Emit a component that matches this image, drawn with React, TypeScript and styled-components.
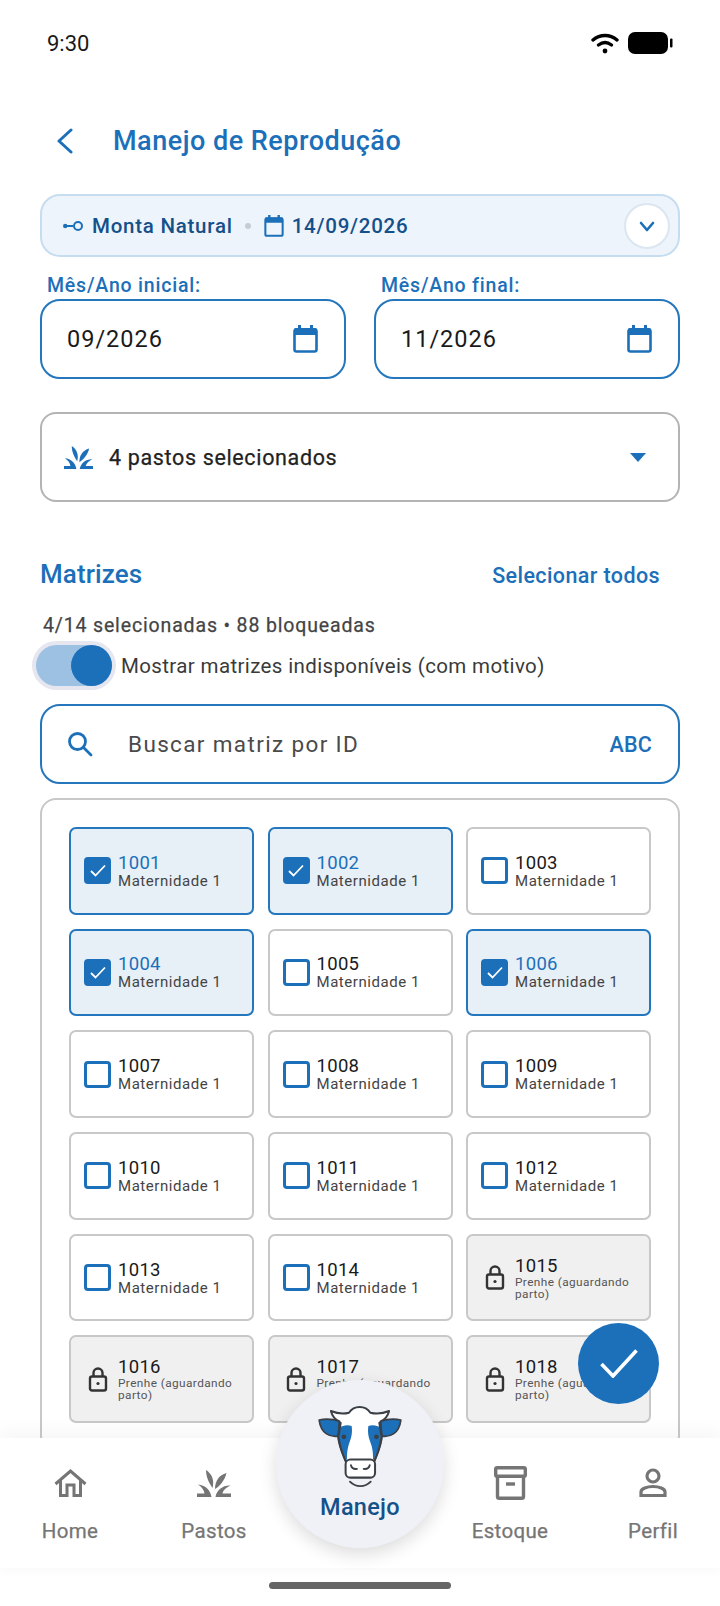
import * as React from "react";
import styled, { createGlobalStyle } from "styled-components";

const BLUE = "#1c6fb9";
const DARK_BLUE = "#14508a";

const GlobalStyle = createGlobalStyle`
  html, body {
    margin: 0;
    padding: 0;
    background: #fff;
  }
  * {
    box-sizing: border-box;
  }
  body {
    font-family: Roboto, "Noto Sans", sans-serif;
  }
`;

const Screen = styled.div`
  position: relative;
  width: 720px;
  height: 1606px;
  overflow: hidden;
  background: #fff;
  color: #1a1a1a;
`;

const StatusBar = styled.div`
  height: 86px;
  padding: 0 46px 0 47px;
  display: flex;
  align-items: center;
  justify-content: space-between;
  font-size: 22px;
  color: #1a1a1a;
`;

const StatusIcons = styled.div`
  display: flex;
  align-items: center;
  gap: 9px;
`;

const Content = styled.div`
  padding: 0 40px;
`;

const Header = styled.div`
  margin-top: 26px;
  height: 58px;
  display: flex;
  align-items: center;
  padding-left: 17px;
  gap: 40px;
`;

const Title = styled.h1`
  margin: 0;
  font-size: 27px;
  font-weight: 500;
  letter-spacing: 0.5px;
  color: ${BLUE};
`;

const Summary = styled.div`
  margin-top: 24px;
  height: 63px;
  border: 2px solid #c6dcef;
  border-radius: 20px;
  background: #eef4fb;
  display: flex;
  align-items: center;
  padding: 1px 8px 0 21px;
  color: ${DARK_BLUE};
  font-size: 20.5px;
  font-weight: 500;
  letter-spacing: 0.75px;
`;

const SummaryText = styled.span`
  margin-left: 8px;
`;

const SummaryDot = styled.span`
  width: 6px;
  height: 6px;
  border-radius: 50%;
  background: #c4ccd4;
  margin: 0 13px 0 12px;
`;

const ExpandButton = styled.div`
  margin-left: auto;
  width: 46px;
  height: 46px;
  border-radius: 50%;
  background: #fff;
  border: 2px solid #dbe6f0;
  display: flex;
  align-items: center;
  justify-content: center;
`;

const DateRow = styled.div`
  margin-top: 18px;
  display: grid;
  grid-template-columns: 306px 306px;
  column-gap: 28px;
`;

const DateLabel = styled.div`
  height: 22px;
  line-height: 22px;
  margin: 0 0 2px 7px;
  font-size: 19.5px;
  font-weight: 500;
  letter-spacing: 0.8px;
  color: ${BLUE};
`;

const Field = styled.div<{ $height: number; $gray?: boolean; $radius: number }>`
  height: ${(p) => p.$height}px;
  border: 2px solid ${(p) => (p.$gray ? "#b4b4b4" : "#2476bd")};
  border-radius: ${(p) => p.$radius}px;
  display: flex;
  align-items: center;
  background: #fff;
`;

const DateField = styled(Field)`
  padding: 0 26px 0 25px;
  justify-content: space-between;
  font-size: 23.5px;
  letter-spacing: 1px;
`;

const PastureField = styled(Field)`
  margin-top: 33px;
  padding: 0 32px 0 22px;
  font-size: 21.5px;
  letter-spacing: 0.65px;
  color: #222;
`;

const PastureText = styled.span`
  margin-left: 16px;
  -webkit-text-stroke: 0.25px #222;
`;

const Caret = styled.div`
  margin-left: auto;
  width: 0;
  height: 0;
  border-left: 8.5px solid transparent;
  border-right: 8.5px solid transparent;
  border-top: 9px solid ${BLUE};
`;

const SectionHeader = styled.div`
  margin-top: 54px;
  height: 36px;
  padding-right: 20px;
  display: flex;
  align-items: center;
  justify-content: space-between;
`;

const SectionTitle = styled.h2`
  margin: 0;
  font-size: 26px;
  font-weight: 500;
  letter-spacing: 0.1px;
  color: ${BLUE};
`;

const SelectAll = styled.span`
  margin-top: 2px;
  font-size: 21.5px;
  font-weight: 500;
  letter-spacing: 0.4px;
  color: ${BLUE};
`;

const CountLine = styled.div`
  margin: 22px 0 0 3px;
  height: 24px;
  line-height: 24px;
  font-size: 19.5px;
  letter-spacing: 0.85px;
  color: #444;
  -webkit-text-stroke: 0.25px #444;
`;

const ToggleRow = styled.div`
  margin-top: 7px;
  height: 41px;
  display: flex;
  align-items: center;
  font-size: 20.5px;
  letter-spacing: 0.37px;
  color: #3a3a3a;
`;

const ToggleTrack = styled.div`
  position: relative;
  margin-left: -4px;
  width: 76px;
  height: 41px;
  flex: none;
  border-radius: 21px;
  background: #9cc1e2;
  box-shadow: 0 0 0 4px #e6e6f0;
`;

const ToggleThumb = styled.div`
  position: absolute;
  top: 0;
  right: 0;
  width: 41px;
  height: 41px;
  border-radius: 50%;
  background: ${BLUE};
`;

const ToggleLabel = styled.span`
  margin-left: 9px;
`;

const SearchField = styled(Field)`
  margin-top: 18px;
  padding: 0 26px 0 25px;
  font-size: 22.5px;
  letter-spacing: 1.36px;
  color: #4a4a4a;
`;

const SearchText = styled.span`
  margin-left: 35px;
`;

const SearchMode = styled.span`
  margin-left: auto;
  font-size: 21.5px;
  font-weight: 500;
  letter-spacing: 0.2px;
  color: ${BLUE};
`;

const ListCard = styled.div`
  margin-top: 14px;
  padding: 27px;
  border: 2px solid #c8c8c8;
  border-radius: 16px;
`;

const CowGrid = styled.div`
  display: grid;
  grid-template-columns: repeat(3, 185px);
  grid-auto-rows: 87.5px;
  column-gap: 13.5px;
  row-gap: 14.2px;
`;

const Cell = styled.div<{ $state: "selected" | "free" | "locked" }>`
  display: flex;
  align-items: center;
  padding-left: 13px;
  border-radius: 7px;
  border: 2px solid ${(p) => (p.$state === "selected" ? "#2476bd" : "#c8c8c8")};
  background: ${(p) =>
    p.$state === "selected"
      ? "#e7eff7"
      : p.$state === "locked"
      ? "#f0f0f1"
      : "#fff"};
`;

const CheckBox = styled.div<{ $checked: boolean }>`
  width: 27px;
  height: 27px;
  flex: none;
  border-radius: 4px;
  border: 3.5px solid ${BLUE};
  background: ${(p) => (p.$checked ? BLUE : "#fff")};
  display: flex;
  align-items: center;
  justify-content: center;
`;

const LockSlot = styled.div`
  width: 27px;
  flex: none;
  display: flex;
  justify-content: center;
`;

const CellBody = styled.div`
  margin-left: 7px;
  min-width: 0;
`;

const CellId = styled.div<{ $selected: boolean }>`
  font-size: 18.5px;
  line-height: 20px;
  letter-spacing: 0.3px;
  color: ${(p) => (p.$selected ? BLUE : "#1a1a1a")};
`;

const CellSub = styled.div`
  font-size: 15px;
  line-height: 16px;
  letter-spacing: 0.55px;
  color: #444;
`;

const CellReason = styled.div`
  font-size: 11.8px;
  line-height: 12px;
  letter-spacing: 0.42px;
  color: #555;
`;

const Fab = styled.div`
  position: absolute;
  left: 578px;
  top: 1323px;
  width: 81px;
  height: 81px;
  border-radius: 50%;
  background: ${BLUE};
  display: flex;
  align-items: center;
  justify-content: center;
`;

const BottomNav = styled.nav`
  position: absolute;
  left: 0;
  right: 0;
  top: 1438px;
  height: 130px;
  background: #fff;
  box-shadow: 0 -8px 16px rgba(0, 0, 0, 0.035), 0 5px 10px rgba(0, 0, 0, 0.02);
  display: grid;
  grid-template-columns: 140px 148px 144px 156px 130px;
`;

const NavItem = styled.div`
  height: 100%;
  padding-top: 27px;
  display: flex;
  flex-direction: column;
  align-items: center;
  font-size: 20.5px;
  letter-spacing: 0.35px;
  color: #757575;
  -webkit-text-stroke: 0.25px #757575;
`;

const NavIconSlot = styled.div`
  height: 36px;
  display: flex;
  align-items: center;
  justify-content: center;
`;

const NavLabel = styled.div`
  margin-top: 18px;
  line-height: 24px;
`;

const CenterBubble = styled.div`
  position: absolute;
  left: 276px;
  top: -58px;
  width: 168px;
  height: 168px;
  border-radius: 50%;
  background: #f0f1f6;
  box-shadow: 0 6px 18px rgba(0, 0, 0, 0.14);
  display: flex;
  flex-direction: column;
  align-items: center;
  padding: 26px 0 0 0;
`;

const CenterLabel = styled.div`
  margin-top: 4px;
  font-size: 23.5px;
  font-weight: 500;
  letter-spacing: 0.3px;
  line-height: 30px;
  color: ${DARK_BLUE};
`;

const HomeIndicator = styled.div`
  position: absolute;
  left: 269px;
  top: 1582px;
  width: 182px;
  height: 7px;
  border-radius: 4px;
  background: #666;
`;

function CalendarIcon({ w, h }: { w: number; h: number }) {
  return (
    <svg width={w} height={h} viewBox="0 0 25 28" fill="none">
      <rect x="1.5" y="4.5" width="22" height="22" rx="2" stroke={BLUE} strokeWidth="2.6" />
      <rect x="1" y="3" width="23" height="7" rx="1.5" fill={BLUE} />
      <rect x="5" y="0" width="3" height="5" fill={BLUE} />
      <rect x="17" y="0" width="3" height="5" fill={BLUE} />
    </svg>
  );
}

function GrassIcon({ color, w, h }: { color: string; w: number; h: number }) {
  return (
    <svg width={w} height={h} viewBox="0 0 34 27" fill={color}>
      <path d="M9 0C15 4 17.5 10 15.5 18C12 13 9 7 9 0Z" />
      <path d="M29.5 3C22 5 18 11 18 19C23 16 28 10 29.5 3Z" />
      <path d="M0 27V23.5H7.5C7 20 5 17 1 14.5C8 15 13.5 20 14.5 27Z" />
      <path d="M34 27V23.5H25.5C26 21 28 18 33.5 15.5C26 15 19.5 20 18.5 27Z" />
    </svg>
  );
}

function LockIcon() {
  return (
    <svg width="20" height="25" viewBox="0 0 20 25" fill="none" stroke="#333" strokeWidth="2.4">
      <rect x="2" y="9.5" width="16" height="14" rx="2" />
      <path d="M5.5 9.5V6a4.5 4.5 0 0 1 9 0v3.5" />
      <circle cx="10" cy="16.5" r="1.6" fill="#333" stroke="none" />
    </svg>
  );
}

function CowIcon() {
  const ink = "#3b4046";
  return (
    <svg width="84" height="82" viewBox="0 0 250 245" fill="none">
      <path
        d="M3 42C25 36 48 40 66 46L60 90C35 94 8 82 3 42Z"
        fill={BLUE}
        stroke={ink}
        strokeWidth="5"
        strokeLinejoin="round"
      />
      <path
        d="M247 42C225 36 202 40 184 46L190 90C215 94 242 82 247 42Z"
        fill={BLUE}
        stroke={ink}
        strokeWidth="5"
        strokeLinejoin="round"
      />
      <path
        d="M38 15C55 22 78 24 92 20C100 8 112 3 124 3C138 3 148 8 156 20C172 24 195 22 212 15C208 30 198 42 186 46L190 90C190 115 178 140 168 165L82 165C72 140 60 115 60 90L64 46C52 42 42 30 38 15Z"
        fill="#fff"
        stroke={ink}
        strokeWidth="6"
        strokeLinejoin="round"
      />
      <path d="M62 66C75 56 90 56 100 60C104 85 96 102 90 120C86 135 86 150 86 160H84C70 130 60 105 62 66Z" fill={BLUE} />
      <path d="M188 66C175 56 160 56 150 60C146 85 154 102 160 120C164 135 164 150 164 160H166C180 130 190 105 188 66Z" fill={BLUE} />
      <path d="M68 48L62 88M182 48L188 88" stroke={ink} strokeWidth="5" />
      <path d="M60 88C64 120 72 142 83 165M190 88C186 120 178 142 167 165" stroke={ink} strokeWidth="6" />
      <circle cx="77" cy="92" r="7" fill={ink} />
      <circle cx="174" cy="92" r="7" fill={ink} />
      <rect x="82" y="160" width="88" height="54" rx="14" fill="#fff" stroke={ink} strokeWidth="6" />
      <path d="M98 177C100 186 108 189 116 188M154 177C152 186 144 189 136 188" stroke={ink} strokeWidth="5.5" strokeLinecap="round" />
      <path d="M95 226C112 244 140 244 157 226" stroke={ink} strokeWidth="5.5" strokeLinecap="round" />
    </svg>
  );
}

type Cow = { id: number; state: "selected" | "free" | "locked" };

const selectedIds = [1001, 1002, 1004, 1006];

const cows: Cow[] = Array.from({ length: 18 }, (_, i) => {
  const id = 1001 + i;
  if (id >= 1015) return { id, state: "locked" };
  return { id, state: selectedIds.includes(id) ? "selected" : "free" };
});

const App: React.FC = () => {
  return (
    <Screen>
      <GlobalStyle />
      <StatusBar>
        <span>9:30</span>
        <StatusIcons>
          <svg width="28" height="22" viewBox="0 0 28 22" fill="none" stroke="#000" strokeWidth="3.4" strokeLinecap="round">
            <path d="M2 8C9 2 19 2 26 8" />
            <path d="M7.5 13C11.5 10 16.5 10 20.5 13" />
            <circle cx="14" cy="19" r="2.4" fill="#000" stroke="none" />
          </svg>
          <svg width="46" height="24" viewBox="0 0 46 24">
            <rect x="0" y="1" width="40" height="22" rx="7" fill="#000" />
            <rect x="42" y="7.5" width="2.5" height="9" rx="1" fill="#000" />
          </svg>
        </StatusIcons>
      </StatusBar>
      <Content>
        <Header>
          <svg width="16" height="26" viewBox="0 0 16 26" fill="none" stroke={BLUE} strokeWidth="3" strokeLinecap="round" strokeLinejoin="round">
            <path d="M14 2L2 13L14 24" />
          </svg>
          <Title>Manejo de Reprodução</Title>
        </Header>

        <Summary>
          <svg width="21" height="10" viewBox="0 0 21 10" fill="none" stroke={BLUE} strokeWidth="2">
            <circle cx="2.2" cy="5" r="2.2" fill={BLUE} stroke="none" />
            <path d="M2 5H10" />
            <circle cx="15" cy="5" r="4" />
          </svg>
          <SummaryText>Monta Natural</SummaryText>
          <SummaryDot />
          <CalendarIcon w={20} h={22} />
          <SummaryText>14/09/2026</SummaryText>
          <ExpandButton>
            <svg width="16" height="11" viewBox="0 0 16 11" fill="none" stroke={BLUE} strokeWidth="2.6" strokeLinecap="round" strokeLinejoin="round">
              <path d="M2 2L8 9L14 2" />
            </svg>
          </ExpandButton>
        </Summary>

        <DateRow>
          <div>
            <DateLabel>Mês/Ano inicial:</DateLabel>
            <DateField $height={80} $radius={20}>
              09/2026
              <CalendarIcon w={25} h={28} />
            </DateField>
          </div>
          <div>
            <DateLabel>Mês/Ano final:</DateLabel>
            <DateField $height={80} $radius={20}>
              11/2026
              <CalendarIcon w={25} h={28} />
            </DateField>
          </div>
        </DateRow>

        <PastureField $height={90} $radius={16} $gray>
          <GrassIcon color={BLUE} w={29} h={23} />
          <PastureText>4 pastos selecionados</PastureText>
          <Caret />
        </PastureField>

        <SectionHeader>
          <SectionTitle>Matrizes</SectionTitle>
          <SelectAll>Selecionar todos</SelectAll>
        </SectionHeader>

        <CountLine>4/14 selecionadas • 88 bloqueadas</CountLine>

        <ToggleRow>
          <ToggleTrack>
            <ToggleThumb />
          </ToggleTrack>
          <ToggleLabel>Mostrar matrizes indisponíveis (com motivo)</ToggleLabel>
        </ToggleRow>

        <SearchField $height={80} $radius={20}>
          <svg width="26" height="26" viewBox="0 0 26 26" fill="none" stroke={BLUE} strokeWidth="2.8" strokeLinecap="round">
            <circle cx="10.5" cy="10.5" r="8" />
            <path d="M16.5 16.5L24 24" />
          </svg>
          <SearchText>Buscar matriz por ID</SearchText>
          <SearchMode>ABC</SearchMode>
        </SearchField>

        <ListCard>
          <CowGrid>
            {cows.map((cow) => (
              <Cell key={cow.id} $state={cow.state}>
                {cow.state === "locked" ? (
                  <LockSlot>
                    <LockIcon />
                  </LockSlot>
                ) : (
                  <CheckBox $checked={cow.state === "selected"}>
                    {cow.state === "selected" && (
                      <svg width="16" height="13" viewBox="0 0 16 13" fill="none" stroke="#fff" strokeWidth="1.8">
                        <path d="M1 7L5.5 11.5L15 1.5" />
                      </svg>
                    )}
                  </CheckBox>
                )}
                <CellBody>
                  <CellId $selected={cow.state === "selected"}>{cow.id}</CellId>
                  {cow.state === "locked" ? (
                    <CellReason>Prenhe (aguardando parto)</CellReason>
                  ) : (
                    <CellSub>Maternidade 1</CellSub>
                  )}
                </CellBody>
              </Cell>
            ))}
          </CowGrid>
        </ListCard>
      </Content>

      <Fab>
        <svg width="38" height="29" viewBox="0 0 38 29" fill="none" stroke="#fff" strokeWidth="3.6">
          <path d="M1.5 15L13 27L36.5 1.5" />
        </svg>
      </Fab>

      <BottomNav>
        <NavItem>
          <NavIconSlot>
            <svg width="33" height="28" viewBox="0 0 33 28" fill="none" stroke="#757575" strokeWidth="3">
              <path d="M1.5 15L16.5 2L31.5 15" />
              <path d="M6.5 11V26.5H13V16H20V26.5H26.5V11" />
            </svg>
          </NavIconSlot>
          <NavLabel>Home</NavLabel>
        </NavItem>
        <NavItem>
          <NavIconSlot>
            <GrassIcon color="#757575" w={34} h={27} />
          </NavIconSlot>
          <NavLabel>Pastos</NavLabel>
        </NavItem>
        <div />
        <NavItem>
          <NavIconSlot>
            <svg width="33" height="34" viewBox="0 0 33 34" fill="none" stroke="#757575" strokeWidth="3.4">
              <rect x="1.7" y="1.7" width="29.6" height="8.6" rx="1.5" />
              <path d="M3.5 10V30.5a1.8 1.8 0 0 0 1.8 1.8H27.7a1.8 1.8 0 0 0 1.8-1.8V10" />
              <path d="M12 18H21" />
            </svg>
          </NavIconSlot>
          <NavLabel>Estoque</NavLabel>
        </NavItem>
        <NavItem>
          <NavIconSlot>
            <svg width="28" height="30" viewBox="0 0 28 30" fill="none" stroke="#757575" strokeWidth="3.2">
              <circle cx="14" cy="8" r="6" />
              <path d="M2 27.5V24C2 20.5 8 18.5 14 18.5S26 20.5 26 24V27.5Z" />
            </svg>
          </NavIconSlot>
          <NavLabel>Perfil</NavLabel>
        </NavItem>
        <CenterBubble>
          <CowIcon />
          <CenterLabel>Manejo</CenterLabel>
        </CenterBubble>
      </BottomNav>

      <HomeIndicator />
    </Screen>
  );
};

export default App;
